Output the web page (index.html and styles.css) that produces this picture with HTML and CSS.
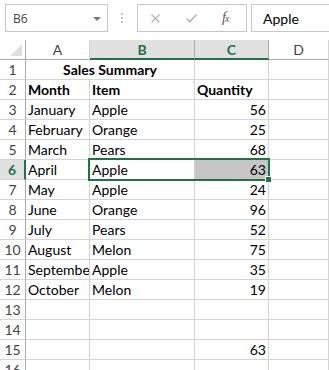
FILE: index.html
```html
<!DOCTYPE html>
<html>
<head>
    <title>Sales Summary</title>
    <link rel="stylesheet" href="styles.css">
</head>
<body>
    <div class="toolbar">
        <div class="namebox">
            <span class="namebox-text">B6</span>
            <span class="caret"></span>
        </div>
        <div class="grip"><i></i><i></i><i></i></div>
        <div class="fx-buttons">
            <svg class="icon-cancel" width="9" height="9" viewBox="0 0 9 9">
                <path d="M0.5 0.5 L8.5 8.5 M8.5 0.5 L0.5 8.5" stroke="#b4b4b4" stroke-width="1.2" fill="none"/>
            </svg>
            <svg class="icon-enter" width="11" height="9" viewBox="0 0 11 9">
                <path d="M0.8 4.6 L3.8 7.8 L10.3 0.8" stroke="#b4b4b4" stroke-width="1.6" fill="none"/>
            </svg>
            <span class="fx">f<span class="fx-x">x</span></span>
        </div>
        <div class="formula">Apple</div>
    </div>

    <div class="sheet">
        <!-- column headers -->
        <div class="corner"></div>
        <div class="ch">A</div>
        <div class="ch on">B</div>
        <div class="ch on">C</div>
        <div class="ch">D</div>

        <div class="rh">1</div>
        <div class="c b center span2">Sales Summary</div>
        <div class="c"></div>
        <div class="c"></div>

        <div class="rh">2</div>
        <div class="c b">Month</div>
        <div class="c b">Item</div>
        <div class="c b">Quantity</div>
        <div class="c"></div>

        <div class="rh">3</div>
        <div class="c">January</div>
        <div class="c">Apple</div>
        <div class="c num">56</div>
        <div class="c"></div>

        <div class="rh">4</div>
        <div class="c">February</div>
        <div class="c">Orange</div>
        <div class="c num">25</div>
        <div class="c"></div>

        <div class="rh">5</div>
        <div class="c">March</div>
        <div class="c">Pears</div>
        <div class="c num">68</div>
        <div class="c"></div>

        <div class="rh on">6</div>
        <div class="c">April</div>
        <div class="c">Apple</div>
        <div class="c num shaded">63</div>
        <div class="c"></div>

        <div class="rh">7</div>
        <div class="c">May</div>
        <div class="c">Apple</div>
        <div class="c num">24</div>
        <div class="c"></div>

        <div class="rh">8</div>
        <div class="c">June</div>
        <div class="c">Orange</div>
        <div class="c num">96</div>
        <div class="c"></div>

        <div class="rh">9</div>
        <div class="c">July</div>
        <div class="c">Pears</div>
        <div class="c num">52</div>
        <div class="c"></div>

        <div class="rh">10</div>
        <div class="c">August</div>
        <div class="c">Melon</div>
        <div class="c num">75</div>
        <div class="c"></div>

        <div class="rh">11</div>
        <div class="c">September</div>
        <div class="c">Apple</div>
        <div class="c num">35</div>
        <div class="c"></div>

        <div class="rh">12</div>
        <div class="c">October</div>
        <div class="c">Melon</div>
        <div class="c num">19</div>
        <div class="c"></div>

        <div class="rh">13</div>
        <div class="c"></div>
        <div class="c"></div>
        <div class="c"></div>
        <div class="c"></div>

        <div class="rh">14</div>
        <div class="c"></div>
        <div class="c"></div>
        <div class="c"></div>
        <div class="c"></div>

        <div class="rh">15</div>
        <div class="c"></div>
        <div class="c"></div>
        <div class="c num">63</div>
        <div class="c"></div>

        <div class="rh">16</div>
        <div class="c"></div>
        <div class="c"></div>
        <div class="c"></div>
        <div class="c"></div>

        <!-- selected range B6:C6 -->
        <div class="selection"></div>
    </div>
</body>
</html>
```

FILE: styles.css
```css
html, body {margin:0;padding:0;background:#fff;overflow:hidden;}
body {font-family: Lato, "Open Sans", sans-serif;font-size:14px;color:#000;}

/* Formula bar */
.toolbar {display:flex;align-items:stretch;height:28px;padding:4px 0 0 5px;margin-bottom:8px;}
.namebox {display:flex;align-items:center;justify-content:space-between;box-sizing:border-box;width:103px;border:1px solid #c6c6c6;padding:0 6px 0 7px;font-family:"Open Sans",sans-serif;font-size:12px;color:#444;}
.caret {width:0;height:0;border-left:4px solid transparent;border-right:4px solid transparent;border-top:4px solid #7a7a7a;margin-top:1px;}
.grip {display:flex;flex-direction:column;justify-content:center;gap:2px;width:2px;margin:0 14px 0 13px;}
.grip i {display:block;width:2px;height:2px;background:#c4c4c4;}
.fx-buttons {display:flex;align-items:center;box-sizing:border-box;width:110px;border:1px solid #c6c6c6;padding:0 0 0 13px;}
.icon-cancel {margin-right:26px;}
.icon-enter {margin-right:25px;margin-top:1px;}
.fx {font-family:"Liberation Serif",serif;font-style:italic;font-size:14px;color:#555;letter-spacing:-1px;}
.fx-x {font-size:10px;}
.formula {flex:1;box-sizing:border-box;border:1px solid #c6c6c6;border-right:none;margin-left:4px;padding:0 0 0 11px;display:flex;align-items:center;font-size:14px;}

/* Grid */
.sheet {display:grid;grid-template-columns:26px 64px 105px 74px 1fr;grid-auto-rows:20px;position:relative;}
.sheet > div {box-sizing:border-box;}
.corner {border-right:1px solid #ababab;border-bottom:1px solid #ababab;position:relative;}
.corner::after {content:"";position:absolute;right:3px;bottom:3px;border-left:12px solid transparent;border-bottom:12px solid #dfdfdf;}
.ch {text-align:center;color:#444;line-height:19px;border-right:1px solid #d4d4d4;border-bottom:1px solid #ababab;}
.ch.on {background:#e1e1e1;color:#217346;font-weight:bold;border-right-color:#ababab;border-bottom:2px solid #217346;}
.rh {text-align:center;color:#444;line-height:19px;border-right:1px solid #ababab;border-bottom:1px solid #d4d4d4;}
.rh.on {background:#e1e1e1;color:#217346;font-weight:bold;border-right:2px solid #217346;}
.c {border-right:1px solid #d4d4d4;border-bottom:1px solid #d4d4d4;line-height:19px;padding:0 2px 0 2px;white-space:nowrap;overflow:hidden;}
.c.b {font-weight:bold;}
.c.num {text-align:right;}
.c.center {text-align:center;}
.span2 {grid-column:span 2;}
.c.shaded {background:#c6c6c6;}

/* overlay on the grid area of B6:C6 */
.selection {position:absolute;grid-row:7 / 8;grid-column:3 / 5;top:-2px;left:-2px;right:-1px;bottom:-1px;border:2px solid #217346;pointer-events:none;}
.selection::after {content:"";position:absolute;right:-4px;bottom:-4px;width:5px;height:5px;background:#217346;border:1px solid #fff;}
```
